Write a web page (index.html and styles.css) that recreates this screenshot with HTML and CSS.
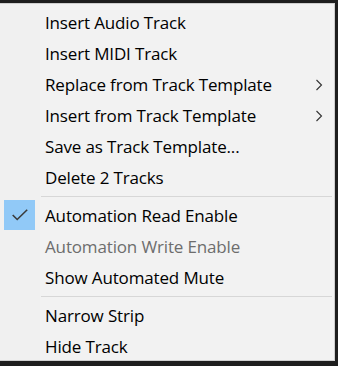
FILE: index.html
```html
<!DOCTYPE html>
<html lang="en">
<head>
<meta charset="UTF-8">
<title>Track menu</title>
<link rel="stylesheet" href="styles.css">
</head>
<body>

<div class="menu">
  <div class="item"><span class="label">Insert Audio Track</span></div>
  <div class="item"><span class="label">Insert MIDI Track</span></div>
  <div class="item"><span class="label">Replace from Track Template</span>
    <svg class="arrow" width="8" height="12" viewBox="0 0 8 12"><path d="M1.5 1 L6.5 6 L1.5 11" fill="none" stroke="#333" stroke-width="1.1"/></svg>
  </div>
  <div class="item"><span class="label">Insert from Track Template</span>
    <svg class="arrow" width="8" height="12" viewBox="0 0 8 12"><path d="M1.5 1 L6.5 6 L1.5 11" fill="none" stroke="#333" stroke-width="1.1"/></svg>
  </div>
  <div class="item"><span class="label">Save as Track Template...</span></div>
  <div class="item"><span class="label">Delete 2 Tracks</span></div>

  <div class="sep"></div>

  <div class="item checked">
    <span class="check">
      <svg width="31" height="30" viewBox="0 0 31 30"><path d="M8.7 15 L13.2 19.5 L23.2 9.8" fill="none" stroke="#3a3a3a" stroke-width="1.6"/></svg>
    </span>
    <span class="label">Automation Read Enable</span>
  </div>
  <div class="item disabled"><span class="label">Automation Write Enable</span></div>
  <div class="item"><span class="label">Show Automated Mute</span></div>

  <div class="sep"></div>

  <div class="item"><span class="label">Narrow Strip</span></div>
  <div class="item"><span class="label">Hide Track</span></div>
</div>

</body>
</html>
```

FILE: styles.css
```css
body{
 margin:0;
 background:#1e1e1e;
 height:366px;
 overflow:hidden;
}

/* MENU */
.menu{
 margin-top:3px;
 width:335px;
 height:358px;
 box-sizing:border-box;
 padding:3px 0 1px;
 background:linear-gradient(to right,#f0f0f0 40px,#f2f2f2 40px);
 border:1px solid #cfcfcf;
 border-left:none;
 font-family:'Open Sans',sans-serif;
 font-size:17px;
 letter-spacing:-0.15px;
 color:#000;
}

.item{
 position:relative;
 display:flex;
 align-items:center;
 height:31px;
 padding-left:45px;
}

.label{
 line-height:31px;
}

.disabled{
 color:#6d6d6d;
}

.arrow{
 position:absolute;
 right:11px;
 top:10px;
}

.check{
 position:absolute;
 left:4px;
 top:0;
 width:31px;
 height:30px;
 background:#91c9f7;
}

.check svg{display:block;}

.sep{
 height:7px;
 display:flex;
 align-items:center;
 padding-left:41px;
 padding-right:2px;
}

.sep::after{
 content:"";
 flex:1;
 border-top:1px solid #d7d7d7;
}
```
